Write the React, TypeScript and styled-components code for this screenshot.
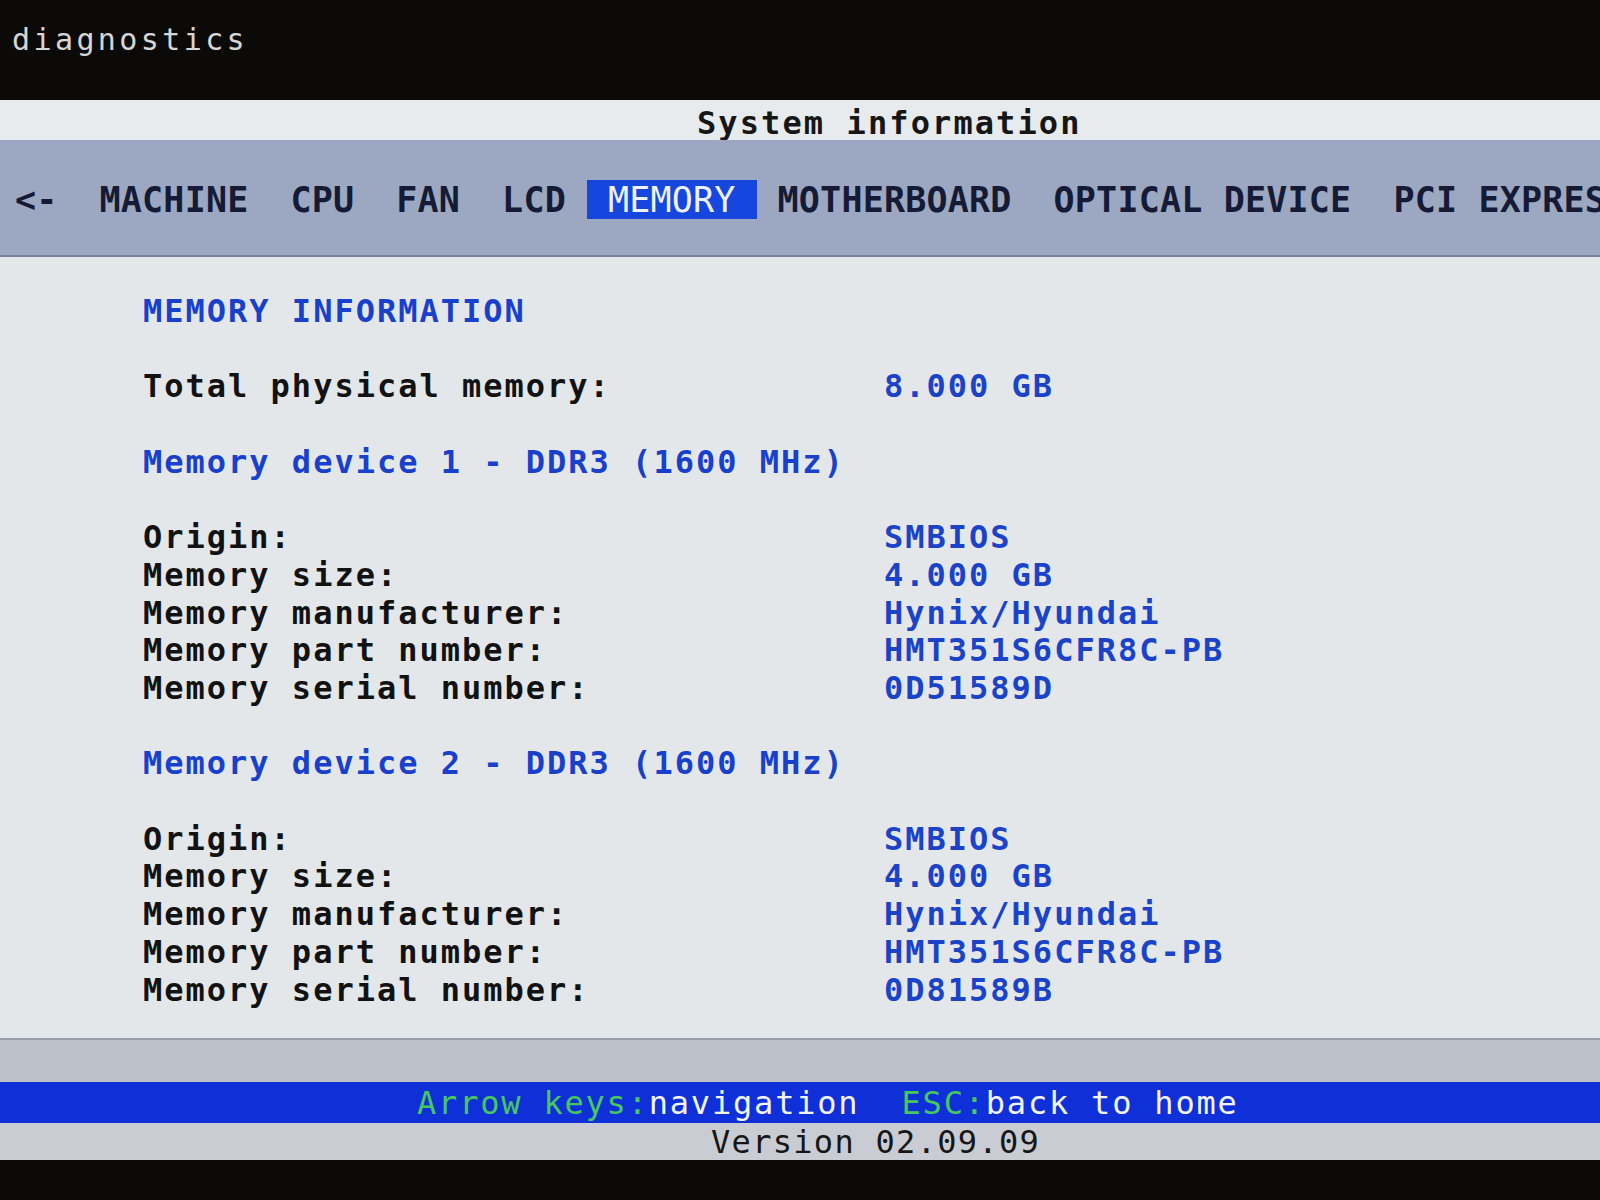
import styled, { createGlobalStyle } from "styled-components";

const GlobalStyle = createGlobalStyle`
    html, body {
        margin: 0;
        padding: 0;
        background: #0b0a09;
    }
    #root {
        width: 1600px;
        height: 1200px;
        overflow: hidden;
    }
`

const Screen = styled.div`
    width: 1600px;
    height: 1200px;
    display: flex;
    flex-direction: column;
    background: #0b0a09;
    font-family: "DejaVu Sans Mono", "Liberation Mono", monospace;
    white-space: pre;
    > * {
        flex-shrink: 0;
    }
`

const TopBar = styled.div`
    height: 100px;
    display: flex;
    align-items: flex-start;
    padding: 22px 0 0 12px;
    box-sizing: border-box;
    color: #d6d6d4;
    font-size: 30px;
    letter-spacing: 3.4px;
`

const TitleBar = styled.div`
    height: 40px;
    display: flex;
    align-items: center;
    padding: 6px 0 0 697px;
    box-sizing: border-box;
    background: #e7ebee;
    color: #161616;
    font-size: 32px;
    font-weight: bold;
    letter-spacing: 2.1px;
`

const NavBar = styled.div`
    height: 117px;
    display: flex;
    align-items: center;
    padding-top: 4px;
    background: #9ca8c1;
    border-bottom: 2px solid #76809a;
    box-sizing: border-box;
    overflow: hidden;
`

const NavItem = styled.div<{ $active?: boolean; $first?: boolean }>`
    flex-shrink: 0;
    height: 39px;
    display: flex;
    align-items: center;
    padding: 0 21px 0 ${props => (props.$first ? "15px" : "21px")};
    background: ${props => (props.$active ? "#1546de" : "transparent")};
    color: ${props => (props.$active ? "#eef2ff" : "#151a35")};
    font-size: 35px;
    font-weight: ${props => (props.$active ? "normal" : "bold")};
    letter-spacing: 0.2px;
`

const Content = styled.main`
    flex: 1 1 auto;
    min-height: 0;
    overflow: hidden;
    background: #e3e7ea;
    padding: 36px 0 0 143px;
    font-size: 32px;
    font-weight: bold;
    letter-spacing: 2px;
    line-height: 37.7px;
`

const Heading = styled.div`
    color: #1840cc;
    margin-bottom: 37.7px;
`

const InfoGrid = styled.div`
    display: grid;
    grid-template-columns: 741px 1fr;
    margin-bottom: 37.7px;
`

const Label = styled.div`
    color: #121212;
`

const Value = styled.div`
    color: #1a43c9;
`

const GreyBand = styled.div`
    height: 44px;
    background: #bcc1c9;
    border-top: 2px solid #9aa0aa;
    box-sizing: border-box;
`

const HelpBar = styled.div`
    height: 41px;
    display: flex;
    align-items: center;
    padding-left: 417px;
    background: #0f30d9;
    color: #f2f4ff;
    font-size: 32px;
    letter-spacing: 1.8px;
`

const Key = styled.span`
    color: #47c85c;
`

const VersionBar = styled.div`
    height: 37px;
    display: flex;
    align-items: center;
    padding-left: 711px;
    background: #c9cdd3;
    color: #161616;
    font-size: 32px;
    letter-spacing: 1.3px;
`

const BottomEdge = styled.div`
    height: 40px;
    background: #0b0a09;
`

const navItems = [
    "<-",
    "MACHINE",
    "CPU",
    "FAN",
    "LCD",
    "MEMORY",
    "MOTHERBOARD",
    "OPTICAL DEVICE",
    "PCI EXPRESS",
]

const devices = [
    {
        title: "Memory device 1 - DDR3 (1600 MHz)",
        rows: [
            ["Origin:", "SMBIOS"],
            ["Memory size:", "4.000 GB"],
            ["Memory manufacturer:", "Hynix/Hyundai"],
            ["Memory part number:", "HMT351S6CFR8C-PB"],
            ["Memory serial number:", "0D51589D"],
        ],
    },
    {
        title: "Memory device 2 - DDR3 (1600 MHz)",
        rows: [
            ["Origin:", "SMBIOS"],
            ["Memory size:", "4.000 GB"],
            ["Memory manufacturer:", "Hynix/Hyundai"],
            ["Memory part number:", "HMT351S6CFR8C-PB"],
            ["Memory serial number:", "0D81589B"],
        ],
    },
]

const App = () => {
    return (
        <>
            <GlobalStyle />
            <Screen>
                <TopBar>diagnostics</TopBar>
                <TitleBar>System information</TitleBar>
                <NavBar>
                    {navItems.map((item, i) => (
                        <NavItem key={item} $first={i === 0} $active={item === "MEMORY"}>
                            {item}
                        </NavItem>
                    ))}
                </NavBar>
                <Content>
                    <Heading>MEMORY INFORMATION</Heading>
                    <InfoGrid>
                        <Label>Total physical memory:</Label>
                        <Value>8.000 GB</Value>
                    </InfoGrid>
                    {devices.map(device => (
                        <div key={device.title}>
                            <Heading>{device.title}</Heading>
                            <InfoGrid>
                                {device.rows.map(([label, value]) => [
                                    <Label key={label}>{label}</Label>,
                                    <Value key={label + "-v"}>{value}</Value>,
                                ])}
                            </InfoGrid>
                        </div>
                    ))}
                </Content>
                <GreyBand />
                <HelpBar>
                    <Key>Arrow keys:</Key>navigation  <Key>ESC:</Key>back to home
                </HelpBar>
                <VersionBar>Version 02.09.09</VersionBar>
                <BottomEdge />
            </Screen>
        </>
    )
}

export default App;
